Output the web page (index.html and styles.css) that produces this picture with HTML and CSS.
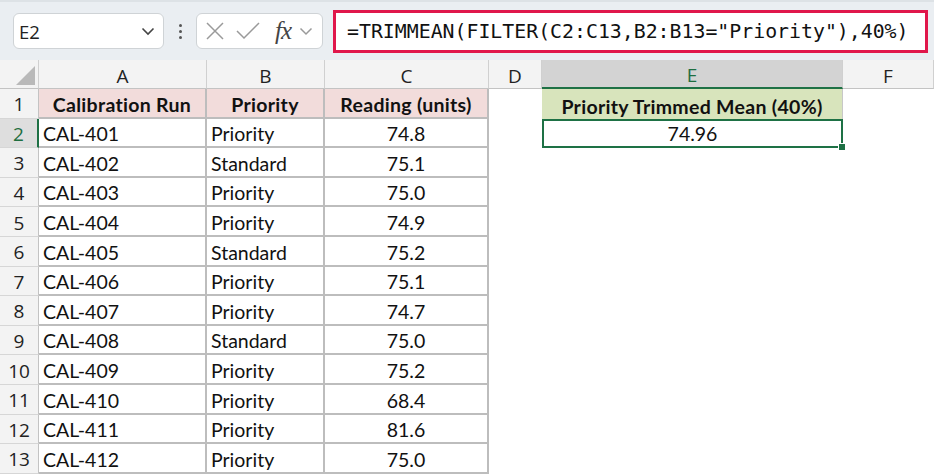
FILE: index.html
```html
<!DOCTYPE html>
<html>
<head>
<meta charset="utf-8">
<link rel="stylesheet" href="styles.css">
</head>
<body>
<div class="app">
  <div class="fbar">
    <div class="namebox">
      <span class="nb-text">E2</span>
      <svg class="chev" width="14" height="9" viewBox="0 0 14 9"><path d="M1.5 1.5 L7 7 L12.5 1.5" fill="none" stroke="#444" stroke-width="1.6"/></svg>
    </div>
    <div class="dots"><i></i><i></i><i></i></div>
    <div class="fxbox">
      <svg width="20" height="20" viewBox="0 0 20 20"><path d="M2 2 L18 18 M18 2 L2 18" stroke="#9a9a9a" stroke-width="1.5" fill="none"/></svg>
      <svg width="26" height="20" viewBox="0 0 26 20"><path d="M2 10 L9 17 L24 2" stroke="#9a9a9a" stroke-width="1.5" fill="none"/></svg>
      <span class="fx">fx</span>
      <svg width="14" height="9" viewBox="0 0 14 9"><path d="M1.5 1.5 L7 7 L12.5 1.5" fill="none" stroke="#9a9a9a" stroke-width="1.5"/></svg>
    </div>
    <div class="formula">=TRIMMEAN(FILTER(C2:C13,B2:B13="Priority"),40%)</div>
  </div>
  <div class="sheet">
    <div class="corner"><span class="tri"></span></div>
    <div class="ch">A</div>
    <div class="ch">B</div>
    <div class="ch">C</div>
    <div class="ch">D</div>
    <div class="ch sel">E</div>
    <div class="ch">F</div>

    <div class="rh">1</div>
    <div class="c t hd">Calibration Run</div>
    <div class="c t hd">Priority</div>
    <div class="c t hd">Reading (units)</div>
    <div class="c"></div>
    <div class="c e1">Priority Trimmed Mean (40%)</div>
    <div class="c"></div>

    <div class="rh rsel">2</div>
    <div class="c t">CAL-401</div>
    <div class="c t">Priority</div>
    <div class="c t num">74.8</div>
    <div class="c"></div>
    <div class="c e2">74.96<span class="handle"></span></div>
    <div class="c"></div>

    <div class="rh">3</div>
    <div class="c t">CAL-402</div>
    <div class="c t">Standard</div>
    <div class="c t num">75.1</div>
    <div class="c"></div><div class="c"></div><div class="c"></div>

    <div class="rh">4</div>
    <div class="c t">CAL-403</div>
    <div class="c t">Priority</div>
    <div class="c t num">75.0</div>
    <div class="c"></div><div class="c"></div><div class="c"></div>

    <div class="rh">5</div>
    <div class="c t">CAL-404</div>
    <div class="c t">Priority</div>
    <div class="c t num">74.9</div>
    <div class="c"></div><div class="c"></div><div class="c"></div>

    <div class="rh">6</div>
    <div class="c t">CAL-405</div>
    <div class="c t">Standard</div>
    <div class="c t num">75.2</div>
    <div class="c"></div><div class="c"></div><div class="c"></div>

    <div class="rh">7</div>
    <div class="c t">CAL-406</div>
    <div class="c t">Priority</div>
    <div class="c t num">75.1</div>
    <div class="c"></div><div class="c"></div><div class="c"></div>

    <div class="rh">8</div>
    <div class="c t">CAL-407</div>
    <div class="c t">Priority</div>
    <div class="c t num">74.7</div>
    <div class="c"></div><div class="c"></div><div class="c"></div>

    <div class="rh">9</div>
    <div class="c t">CAL-408</div>
    <div class="c t">Standard</div>
    <div class="c t num">75.0</div>
    <div class="c"></div><div class="c"></div><div class="c"></div>

    <div class="rh">10</div>
    <div class="c t">CAL-409</div>
    <div class="c t">Priority</div>
    <div class="c t num">75.2</div>
    <div class="c"></div><div class="c"></div><div class="c"></div>

    <div class="rh">11</div>
    <div class="c t">CAL-410</div>
    <div class="c t">Priority</div>
    <div class="c t num">68.4</div>
    <div class="c"></div><div class="c"></div><div class="c"></div>

    <div class="rh">12</div>
    <div class="c t">CAL-411</div>
    <div class="c t">Priority</div>
    <div class="c t num">81.6</div>
    <div class="c"></div><div class="c"></div><div class="c"></div>

    <div class="rh">13</div>
    <div class="c t">CAL-412</div>
    <div class="c t">Priority</div>
    <div class="c t num">75.0</div>
    <div class="c"></div><div class="c"></div><div class="c"></div>
  </div>
</div>
</body>
</html>
```

FILE: styles.css
```css
* { box-sizing: border-box; }
html, body { margin: 0; padding: 0; background: #ffffff; }
body { width: 934px; height: 475px; overflow: hidden; }

.app { display: flex; flex-direction: column; }

.fbar {
  height: 60px;
  background: #eaeef2;
  border-top: 2px solid #dde2e6;
  display: flex;
  align-items: center;
  padding-left: 13px;
}

.namebox {
  width: 151px;
  height: 36px;
  background: #fff;
  border: 1px solid #cfd3d6;
  border-radius: 6px;
  display: flex;
  align-items: center;
  justify-content: space-between;
  padding: 0 8px 0 5px;
}
.nb-text { font-family: "Open Sans", sans-serif; font-size: 18.5px; color: #222; }

.dots {
  width: 32px;
  display: flex;
  flex-direction: column;
  align-items: center;
  gap: 3px;
}
.dots i { display: block; width: 3px; height: 3px; background: #555; border-radius: 50%; }

.fxbox {
  width: 127px;
  height: 36px;
  background: #fff;
  border: 1px solid #cfd3d6;
  border-radius: 6px;
  display: flex;
  align-items: center;
  padding: 0 4px 0 8px;
  gap: 10px;
}
.fx {
  font-family: "Liberation Serif", serif;
  font-style: italic;
  font-size: 25px;
  color: #444;
  letter-spacing: -1px;
  margin-left: 4px;
  margin-right: -2px;
}

.formula {
  margin-left: 10px;
  width: 595px;
  height: 43px;
  background: #fff;
  border: 3px solid #e0174b;
  font-family: "DejaVu Sans Mono", monospace;
  font-size: 19.85px;
  color: #111;
  display: flex;
  align-items: center;
  padding-left: 11px;
  margin-top: 1px;
}

.sheet {
  display: grid;
  grid-template-columns: 39px 168px 118px 164px 53px 301px 91px;
  grid-template-rows: 29px repeat(13, 29.6px);
  font-family: Lato, sans-serif;
}

.corner {
  background: #f3f3f3;
  border-right: 1px solid #d0d0d0;
  border-bottom: 1px solid #c3c3c3;
  position: relative;
}
.tri {
  position: absolute;
  right: 3px;
  bottom: 3px;
  width: 0; height: 0;
  border-left: 19px solid transparent;
  border-bottom: 19px solid #b9b9b9;
}

.ch {
  background: #f3f3f3;
  border-right: 1px solid #d0d0d0;
  border-bottom: 1px solid #c3c3c3;
  font-family: "Open Sans", sans-serif;
  font-size: 19px;
  color: #222;
  display: flex;
  align-items: center;
  justify-content: center;
  padding-top: 3px;
}
.ch.sel {
  background: #d3d3d3;
  color: #1e6e40;
  border-bottom: 2px solid #1e7145;
}

.rh {
  background: #f3f3f3;
  border-right: 1px solid #c3c3c3;
  border-bottom: 1px solid #d6d6d6;
  font-family: "Open Sans", sans-serif;
  font-size: 19px;
  color: #222;
  display: flex;
  align-items: center;
  justify-content: center;
  padding-top: 2px;
}
.rh.rsel {
  background: #dedede;
  color: #1e6e40;
  border-right: 2px solid #1e7145;
}

.c {
  font-size: 19.5px;
  color: #111;
  display: flex;
  align-items: flex-end;
  padding: 0 4px 1px 4px;
  white-space: nowrap;
}
.t {
  border-right: 2px solid #bdbdbd;
  border-bottom: 2px solid #bdbdbd;
}
.hd {
  background: #f2dcdb;
  font-weight: bold;
  justify-content: center;
  letter-spacing: 0.3px;
}
.num { justify-content: center; }

.e1 {
  background: #d8e4bc;
  font-weight: bold;
  justify-content: center;
  letter-spacing: 0.3px;
  border-right: 1px solid #c8c8c8;
}
.e2 {
  justify-content: center;
  border: 2px solid #1e7145;
  position: relative;
}
.handle {
  position: absolute;
  right: -5px;
  bottom: -5px;
  width: 8px;
  height: 8px;
  background: #1e7145;
  border: 1px solid #fff;
}
```
